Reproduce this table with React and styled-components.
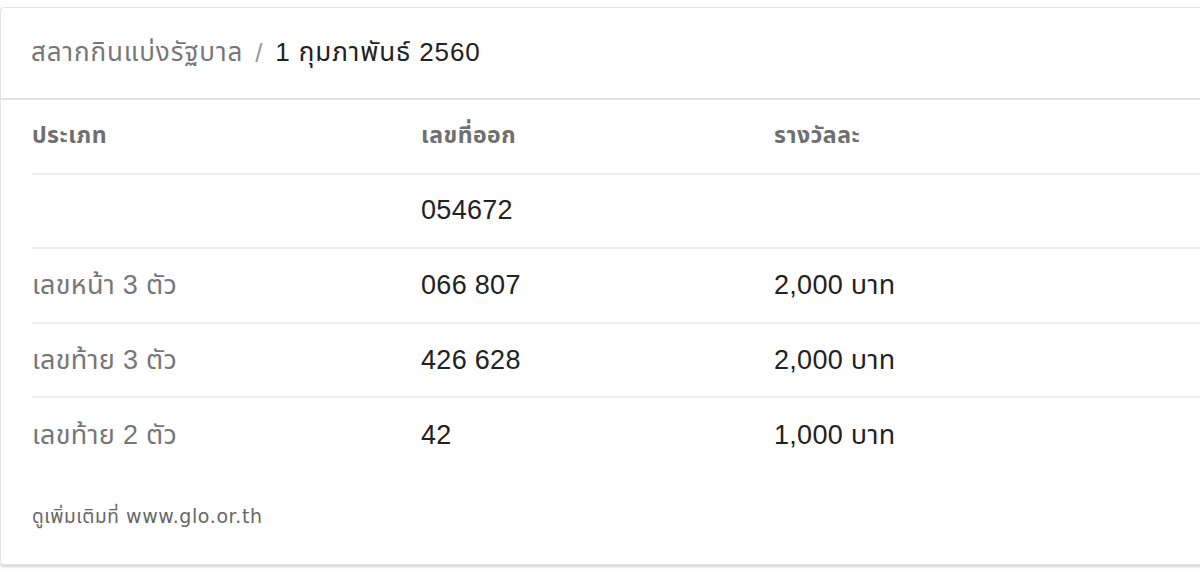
import React from "react";
import styled, { createGlobalStyle } from "styled-components";

const GlobalStyle = createGlobalStyle`
  html, body {
    margin: 0;
    padding: 0;
    background: #ffffff;
    overflow: hidden;
  }
  body {
    font-family: "Liberation Sans", "Noto Sans Thai", Tahoma, sans-serif;
  }
`;

const rows = [
  { type: "", number: "054672", prize: "" },
  { type: "เลขหน้า 3 ตัว", number: "066 807", prize: "2,000 บาท" },
  { type: "เลขท้าย 3 ตัว", number: "426 628", prize: "2,000 บาท" },
  { type: "เลขท้าย 2 ตัว", number: "42", prize: "1,000 บาท" },
];

export default function App() {
  return (
    <Page>
      <GlobalStyle />
      <Card>
        <Header>
          <Crumb>สลากกินแบ่งรัฐบาล</Crumb>
          <Slash>/</Slash>
          <DrawDate>1 กุมภาพันธ์ 2560</DrawDate>
        </Header>
        <Table>
          <Row>
            <HeadCell>ประเภท</HeadCell>
            <HeadCell>เลขที่ออก</HeadCell>
            <HeadCell>รางวัลละ</HeadCell>
          </Row>
          {rows.map((r, i) => (
            <Row key={i} last={i === rows.length - 1}>
              <TypeCell>{r.type}</TypeCell>
              <ValueCell>{r.number}</ValueCell>
              <ValueCell>{r.prize}</ValueCell>
            </Row>
          ))}
        </Table>
        <Footer>ดูเพิ่มเติมที่ www.glo.or.th</Footer>
      </Card>
    </Page>
  );
}

const Page = styled.div`
  width: 1200px;
  height: 570px;
  padding-top: 7px;
  box-sizing: border-box;
  overflow: hidden;
`;

const Card = styled.div`
  width: 1220px;
  height: 558px;
  box-sizing: border-box;
  background: #fff;
  border: 1px solid #e4e4e4;
  border-radius: 4px;
  box-shadow: 0 2px 3px rgba(0, 0, 0, 0.18);
  display: flex;
  flex-direction: column;
`;

const Header = styled.div`
  height: 90px;
  display: flex;
  align-items: center;
  gap: 12px;
  padding-left: 30px;
  border-bottom: 2px solid #e2e2e2;
  font-size: 26px;
  letter-spacing: 0.9px;
`;

const Crumb = styled.span`
  color: #777;
`;

const Slash = styled.span`
  color: #999;
`;

const DrawDate = styled.span`
  color: #222;
`;

const Table = styled.div`
  padding-left: 31px;
  display: flex;
  flex-direction: column;
`;

const Row = styled.div`
  display: grid;
  grid-template-columns: 389px 353px 1fr;
  align-items: center;
  box-sizing: border-box;
  height: 74.6px;
  border-bottom: ${(p) => (p.last ? "none" : "2px solid #eeeeee")};
`;

const HeadCell = styled.div`
  font-size: 23px;
  font-weight: bold;
  color: #6f6f6f;
  letter-spacing: 0.5px;
`;

const TypeCell = styled.div`
  font-size: 27px;
  color: #777;
  letter-spacing: 0.3px;
`;

const ValueCell = styled.div`
  font-size: 27px;
  color: #222;
  letter-spacing: 0.3px;
`;

const Footer = styled.div`
  padding: 30px 0 0 31px;
  font-family: "DejaVu Sans", "Noto Sans Thai", sans-serif;
  font-size: 19px;
  letter-spacing: 0.6px;
  color: #666;
`;
